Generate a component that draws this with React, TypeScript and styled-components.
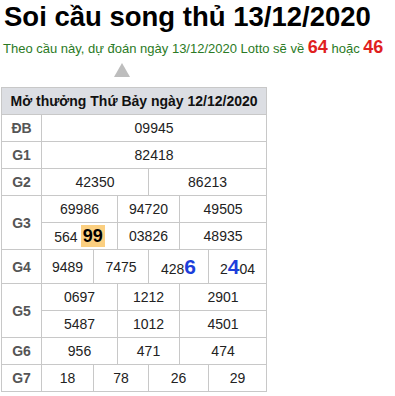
import React from 'react';
import styled, {createGlobalStyle} from 'styled-components';

const GlobalStyle = createGlobalStyle`
  body {
    margin: 0;
    background: #fff;
    font-family: "Liberation Sans", Arial, sans-serif;
  }
`;

const Page = styled.main`
  padding: 0 0 0 1px;
  width: 394px;
`;
const Title = styled.h1`
  margin: 0;
  padding: 1px 0 0 3px;
  font-size: 27.5px;
  line-height: 31px;
  font-weight: 700;
  color: #000;
`;
const Predict = styled.p`
  margin: 0;
  padding: 6px 0 0 2px;
  font-size: 13px;
  line-height: 18px;
  color: #2b7a25;
  white-space: nowrap;
`;
const Lotto = styled.b`
  font-size: 18px;
  color: #e01f1f;
`;
const Pointer = styled.div`
  width: 0;
  height: 0;
  margin: 5px 0 0 113px;
  border-left: 8px solid transparent;
  border-right: 8px solid transparent;
  border-bottom: 14px solid #bdbdbd;
`;
const Result = styled.table`
  margin-top: 10px;
  width: 266px;
  table-layout: fixed;
  border-collapse: collapse;
  border: 1px solid #c8c8c8;
  font-size: 14px;
  color: #222;
`;
const Head = styled.th`
  height: 26px;
  padding: 0;
  background: #dcdee3;
  border: 1px solid #c8c8c8;
  font-size: 14px;
  font-weight: 700;
  color: #111;
  text-align: center;
  white-space: nowrap;
`;
const Line = styled.tr<{$tall?: boolean}>`
  height: ${({$tall}) => ($tall ? '34px' : '27px')};
`;
const Label = styled.td`
  padding: 0;
  border: 1px solid #c8c8c8;
  font-size: 14px;
  font-weight: 700;
  color: #555;
  text-align: center;
`;
const Num = styled.td`
  padding: 0;
  border: 1px solid #c8c8c8;
  text-align: center;
  white-space: nowrap;
`;
const Mark = styled.b`
  display: inline-block;
  margin-left: 3px;
  padding: 1px 2px;
  background: #fbcf80;
  font-size: 18px;
  line-height: 20px;
  color: #000;
`;
const Hit = styled.b`
  font-size: 21px;
  color: #1d3fdb;
`;

type Cell = {value: React.ReactNode; span: number};
type Row = {label: string; lines: Cell[][]};

const rows: Row[] = [
  {label: 'ĐB', lines: [[{value: '09945', span: 6}]]},
  {label: 'G1', lines: [[{value: '82418', span: 6}]]},
  {label: 'G2', lines: [[{value: '42350', span: 3}, {value: '86213', span: 3}]]},
  {
    label: 'G3',
    lines: [
      [{value: '69986', span: 2}, {value: '94720', span: 2}, {value: '49505', span: 2}],
      [
        {value: <>564<Mark>99</Mark></>, span: 2},
        {value: '03826', span: 2},
        {value: '48935', span: 2},
      ],
    ],
  },
  {
    label: 'G4',
    lines: [[
      {value: '9489', span: 1},
      {value: '7475', span: 2},
      {value: <>428<Hit>6</Hit></>, span: 2},
      {value: <>2<Hit>4</Hit>04</>, span: 1},
    ]],
  },
  {
    label: 'G5',
    lines: [
      [{value: '0697', span: 2}, {value: '1212', span: 2}, {value: '2901', span: 2}],
      [{value: '5487', span: 2}, {value: '1012', span: 2}, {value: '4501', span: 2}],
    ],
  },
  {label: 'G6', lines: [[{value: '956', span: 2}, {value: '471', span: 2}, {value: '474', span: 2}]]},
  {label: 'G7', lines: [[{value: '18', span: 1}, {value: '78', span: 2}, {value: '26', span: 2}, {value: '29', span: 1}]]},
];

// column breakpoints measured off the page: 41, 93, 117, 148, 179, 208, 266
const colWidths = [40, 52, 24, 31, 31, 29, 58];

export default function App(): JSX.Element {
  return (
    <Page>
      <GlobalStyle />
      <Title>Soi cầu song thủ 13/12/2020</Title>
      <Predict>
        Theo cầu này, dự đoán ngày 13/12/2020 Lotto sẽ về <Lotto>64</Lotto> hoặc <Lotto>46</Lotto>
      </Predict>
      <Pointer />
      <Result>
        <colgroup>
          {colWidths.map((w, i) => (
            <col key={i} style={{width: w}} />
          ))}
        </colgroup>
        <thead>
          <tr>
            <Head colSpan={7}>Mở thưởng Thứ Bảy ngày 12/12/2020</Head>
          </tr>
        </thead>
        <tbody>
          {rows.map((row) =>
            row.lines.map((line, li) => (
              <Line key={row.label + li} $tall={row.label === 'G4'}>
                {li === 0 && <Label rowSpan={row.lines.length}>{row.label}</Label>}
                {line.map((cell, ci) => (
                  <Num key={ci} colSpan={cell.span}>
                    {cell.value}
                  </Num>
                ))}
              </Line>
            ))
          )}
        </tbody>
      </Result>
    </Page>
  );
}
